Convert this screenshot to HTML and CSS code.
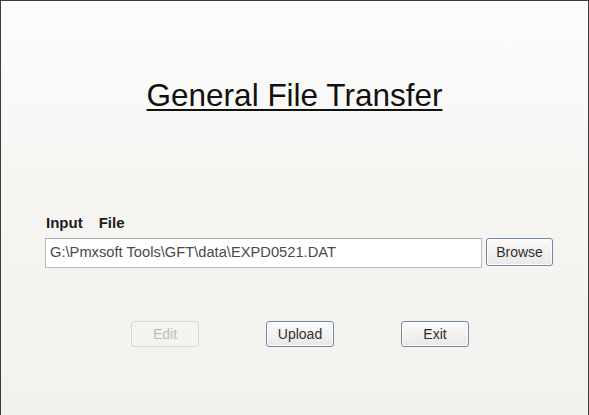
FILE: index.html
```html
<!DOCTYPE html>
<html>
<head>
<meta charset="utf-8">
<link rel="stylesheet" href="styles.css">
</head>
<body>
<div class="window">
  <h1 class="title">General File Transfer</h1>
  <div class="label"><span>Input</span><span>File</span></div>
  <div class="file-row">
    <div class="path">G:\Pmxsoft Tools\GFT\data\EXPD0521.DAT</div>
    <button class="btn browse">Browse</button>
  </div>
  <div class="actions">
    <button class="btn disabled">Edit</button>
    <button class="btn">Upload</button>
    <button class="btn">Exit</button>
  </div>
</div>
</body>
</html>
```

FILE: styles.css
```css
html, body {
  margin: 0;
  padding: 0;
}
body {
  font-family: "Liberation Sans", Arial, sans-serif;
  width: 589px;
  height: 415px;
  overflow: hidden;
}
.window {
  box-sizing: border-box;
  width: 589px;
  height: 415px;
  border-top: 1px solid #3c3c3c;
  border-left: 1px solid #3c3c3c;
  border-right: 1px solid #3c3c3c;
  background: linear-gradient(to bottom, #fcfcfc 0%, #f6f5f2 45%, #f2f1ec 100%);
  display: flex;
  flex-direction: column;
}
.title {
  margin: 76px 0 0 0;
  font-weight: normal;
  font-size: 31.5px;
  line-height: 36px;
  height: 36px;
  text-align: center;
  color: #111;
  text-decoration: underline;
  text-decoration-thickness: 2px;
  text-underline-offset: 3px;
}
.label {
  margin: 102px 0 0 45px;
  font-size: 15px;
  font-weight: bold;
  line-height: 16px;
  height: 16px;
  color: #1c1c1c;
  display: flex;
  gap: 16px;
}
.file-row {
  margin: 7px 0 0 44px;
  display: flex;
  align-items: flex-start;
  gap: 4px;
}
.path {
  box-sizing: border-box;
  width: 437px;
  height: 30px;
  background: #fff;
  border: 1px solid #b5bcc4;
  border-top-color: #a2a9b1;
  padding: 5px 0 0 4px;
  font-size: 14.7px;
  line-height: 17px;
  color: #4a4a4a;
  white-space: nowrap;
}
.btn {
  box-sizing: border-box;
  width: 68px;
  height: 26px;
  padding: 0;
  font-family: "Liberation Sans", Arial, sans-serif;
  font-size: 14px;
  color: #2f2f2f;
  background: linear-gradient(to bottom, #fbfbfa 0%, #f3f2ef 50%, #e9e8e3 100%);
  border: 1px solid #7089a6;
  border-radius: 3px;
  box-shadow: inset 0 0 0 1px #fbfbfb;
}
.browse {
  width: 67px;
  height: 28px;
}
.actions {
  margin: 53px 0 0 130px;
  display: flex;
  gap: 67px;
}
.btn.disabled {
  color: #bcbcbc;
  border-color: #d8d8d5;
  background: #f4f3f0;
  box-shadow: none;
}
```
